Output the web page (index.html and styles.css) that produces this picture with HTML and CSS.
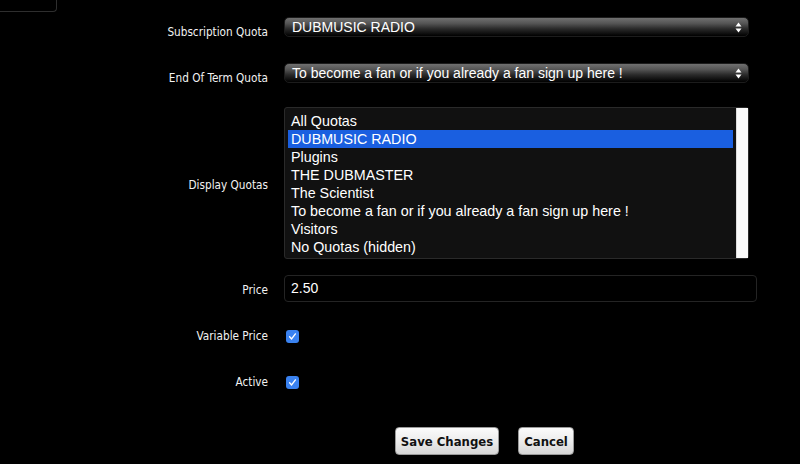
FILE: index.html
```html
<!DOCTYPE html>
<html>
<head>
<meta charset="utf-8">
<link rel="stylesheet" href="styles.css">
</head>
<body>
<div class="corner"></div>
<form class="form">
  <div class="row r1">
    <label class="lbl lbl-sel">Subscription Quota</label>
    <div class="select">
      <span class="select-text">DUBMUSIC RADIO</span>
      <svg class="arrows" width="7" height="11" viewBox="0 0 7 11"><path d="M3.5 0.5 L6.5 4.5 L0.5 4.5 Z M3.5 10.5 L6.5 6.5 L0.5 6.5 Z" fill="#fff"/></svg>
    </div>
  </div>
  <div class="row r2">
    <label class="lbl lbl-sel">End Of Term Quota</label>
    <div class="select">
      <span class="select-text">To become a fan or if you already a fan sign up here !</span>
      <svg class="arrows" width="7" height="11" viewBox="0 0 7 11"><path d="M3.5 0.5 L6.5 4.5 L0.5 4.5 Z M3.5 10.5 L6.5 6.5 L0.5 6.5 Z" fill="#fff"/></svg>
    </div>
  </div>
  <div class="row r3">
    <label class="lbl lbl-list">Display Quotas</label>
    <div class="listbox">
      <ul class="options">
        <li>All Quotas</li>
        <li class="sel">DUBMUSIC RADIO</li>
        <li>Plugins</li>
        <li>THE DUBMASTER</li>
        <li>The Scientist</li>
        <li>To become a fan or if you already a fan sign up here !</li>
        <li>Visitors</li>
        <li>No Quotas (hidden)</li>
      </ul>
      <div class="scrollbar"></div>
    </div>
  </div>
  <div class="row r4">
    <label class="lbl lbl-input">Price</label>
    <div class="input">2.50</div>
  </div>
  <div class="row row-check r5">
    <label class="lbl">Variable Price</label>
    <span class="check"><svg width="13" height="13" viewBox="0 0 13 13"><path d="M3.6 6.8 L5.6 8.9 L9.4 3.9" fill="none" stroke="#fff" stroke-width="1.4" stroke-linecap="round" stroke-linejoin="round"/></svg></span>
  </div>
  <div class="row row-check r6">
    <label class="lbl">Active</label>
    <span class="check"><svg width="13" height="13" viewBox="0 0 13 13"><path d="M3.6 6.8 L5.6 8.9 L9.4 3.9" fill="none" stroke="#fff" stroke-width="1.4" stroke-linecap="round" stroke-linejoin="round"/></svg></span>
  </div>
  <div class="buttons">
    <button type="button" class="btn btn-save">Save Changes</button>
    <button type="button" class="btn btn-cancel">Cancel</button>
  </div>
</form>
</body>
</html>
```

FILE: styles.css
```css
html, body {
  margin: 0;
  padding: 0;
  background: #000;
}
body {
  width: 800px;
  height: 464px;
  overflow: hidden;
  font-family: "Liberation Sans", Arial, sans-serif;
  color: #fff;
}
.corner {
  width: 56px;
  height: 11px;
  border-right: 1px solid #2e2e2e;
  border-bottom: 1px solid #2e2e2e;
  border-bottom-right-radius: 4px;
}
.form {
  display: flex;
  flex-direction: column;
}
.row {
  display: grid;
  grid-template-columns: 268px auto;
  column-gap: 16px;
  align-items: start;
  justify-content: start;
}
.row-check { align-items: center; }
.r1 { margin-top: 5px; }
.r2 { margin-top: 26px; }
.r3 { margin-top: 24px; }
.r4 { margin-top: 16px; }
.r5 { margin-top: 27px; }
.r6 { margin-top: 32px; }
.lbl {
  text-align: right;
  font-family: "DejaVu Sans Condensed", "DejaVu Sans", sans-serif;
  font-size: 11.7px;
  color: #f2f2f2;
  line-height: 14px;
  height: 14px;
}
.lbl-sel { padding-top: 8px; margin-bottom: -8px; }
.lbl-list { padding-top: 71px; }
.lbl-input { padding-top: 8px; }

.select {
  position: relative;
  width: 463px;
  height: 18px;
  border: 1px solid #1c1c1c;
  border-radius: 5px;
  background: linear-gradient(to bottom, #707070 0%, #555 30%, #2a2a2a 60%, #000 100%);
  display: flex;
  align-items: center;
}
.select-text {
  padding-left: 7px;
  font-size: 14px;
  line-height: 18px;
  color: #fff;
  white-space: nowrap;
}
.arrows {
  position: absolute;
  right: 6px;
  top: 4px;
}

.listbox {
  width: 463px;
  height: 150px;
  border: 1px solid #2a2a2a;
  border-radius: 3px;
  background: #111;
  display: flex;
}
.options {
  list-style: none;
  margin: 0;
  padding: 4px 3px 0 3px;
  flex: 1;
}
.options li {
  height: 18px;
  line-height: 18px;
  padding-left: 3px;
  font-size: 14.3px;
  color: #fff;
  white-space: nowrap;
}
.options li.sel {
  background: #1a5fe0;
}
.scrollbar {
  width: 11px;
  background: #fafafa;
  border-left: 1px solid #ddd;
}

.input {
  width: 465px;
  height: 25px;
  border: 1px solid #242424;
  border-radius: 4px;
  background: #000;
  padding-left: 6px;
  font-size: 14px;
  line-height: 25px;
  color: #fff;
}

.check {
  margin-left: 2px;
  width: 13px;
  height: 13px;
  border-radius: 3px;
  background: #3a82f0;
  display: block;
}
.check svg { display: block; }

.buttons {
  margin-top: 38px;
  padding-left: 395px;
  display: flex;
  gap: 19px;
}
.btn {
  height: 28px;
  border: 1px solid #9a9a9a;
  border-radius: 4px;
  background: linear-gradient(to bottom, #fbfbfb 0%, #ececec 50%, #d6d6d6 100%);
  font-family: "DejaVu Sans Condensed", "DejaVu Sans", sans-serif;
  font-weight: bold;
  font-size: 13px;
  color: #111;
  padding: 0;
  margin: 0;
}
.btn-save { width: 104px; }
.btn-cancel { width: 56px; }
```
